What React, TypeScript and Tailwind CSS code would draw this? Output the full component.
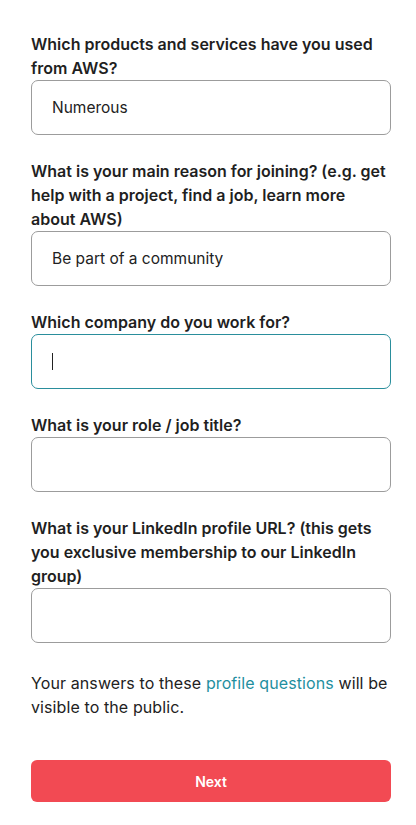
import React from "react";

const font = { fontFamily: "Inter, 'Noto Sans', Arial, sans-serif" };

interface FieldProps {
  label: string;
  value?: string;
  focused?: boolean;
}

function Field({ label, value, focused }: FieldProps) {
  return (
    <div className="flex flex-col">
      <label className="text-[16px] leading-[24px] font-semibold text-[#1f1f1f]">
        {label}
      </label>
      <div
        className={`h-[55px] rounded-[7px] flex items-center px-[20px] bg-white ${
          focused ? "border border-[#2a8e9c]" : "border border-[#9c9c9c]"
        }`}
      >
        {value && <span className="text-[15.5px] text-[#222]">{value}</span>}
        {focused && <span className="w-px h-[17px] bg-[#222]" />}
      </div>
    </div>
  );
}

export default function App() {
  return (
    <div className="min-h-[825px] bg-white px-[31px] pt-[32px] pb-6" style={font}>
      <div className="flex flex-col gap-6 w-[360px]">
        <Field label="Which products and services have you used from AWS?" value="Numerous" />
        <Field label="What is your main reason for joining? (e.g. get help with a project, find a job, learn more about AWS)" value="Be part of a community" />
        <Field label="Which company do you work for?" focused />
        <Field label="What is your role / job title?" />
        <Field label="What is your LinkedIn profile URL? (this gets you exclusive membership to our LinkedIn group)" />
      </div>

      <p className="mt-[28px] w-[360px] text-[16px] leading-[24px] tracking-[0.1px] text-[#222]">
        Your answers to these{" "}
        <a className="text-[#1f8f9f]">profile questions</a> will be visible to the public.
      </p>

      <button className="mt-[41px] w-[360px] h-[42px] rounded-[6px] bg-[#f24a53] text-white text-[14px] font-semibold">
        Next
      </button>
    </div>
  );
}
